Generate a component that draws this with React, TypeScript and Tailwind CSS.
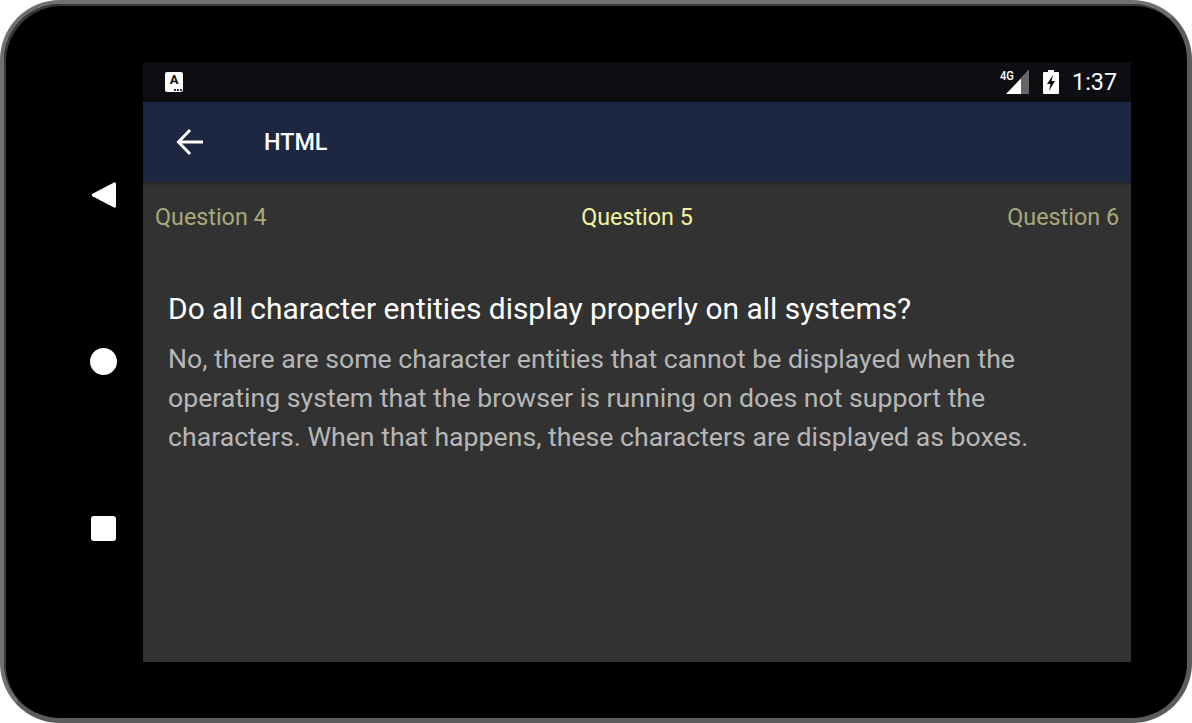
const roboto = "font-['Roboto',sans-serif]";

function AppIcon() {
  return (
    <div className="relative w-[18px] h-[20px] bg-white rounded-[2px] flex justify-center">
      <span className="font-['Roboto',sans-serif] font-bold text-[13px] leading-[16px] text-[#0c0e12]">A</span>
      <div className="absolute right-[1px] bottom-[1px] flex gap-[1px]">
        <div className="w-[2px] h-[2px] bg-[#333]" />
        <div className="w-[2px] h-[2px] bg-[#333]" />
        <div className="w-[2px] h-[2px] bg-[#333]" />
      </div>
    </div>
  );
}

function SignalIcon() {
  return (
    <svg width="30" height="32" viewBox="0 -4 30 32" className="block">
      <polygon points="29,0 29,24 6,24" fill="#fff" />
      <polygon points="29,0 29,24 21,24 21,8.3" fill="#666" />
      <text x="0" y="10" fontFamily="Roboto, sans-serif" fontWeight="500" fontSize="13.5" textLength="14" lengthAdjust="spacingAndGlyphs" fill="#fff">4G</text>
    </svg>
  );
}

function BatteryIcon() {
  return (
    <svg width="16" height="24" viewBox="0 0 16 24" className="block">
      <path d="M5 0h6v2h4a1 1 0 0 1 1 1v20a1 1 0 0 1-1 1H1a1 1 0 0 1-1-1V3a1 1 0 0 1 1-1h4z" fill="#fff" />
      <path d="M10 5 4 14h3.5L6 21l6-10H8.5z" fill="#0c0e12" />
    </svg>
  );
}

function BackArrow() {
  return (
    <svg width="28" height="28" viewBox="0 0 28 28" fill="none" stroke="#fff" strokeWidth="3" className="block">
      <path d="M27 14H3" />
      <path d="M14 2 2.5 14 14 26" />
    </svg>
  );
}

export default function App() {
  return (
    <div className={`w-[1192px] h-[723px] bg-white overflow-hidden ${roboto}`}>
      <div className="w-full h-full flex bg-black rounded-[60px] border-[4px] border-r-[5px] border-b-[5px] border-t-[#707070] border-l-[#707070] border-r-[#5c5c5c] border-b-[#5c5c5c] shadow-[inset_2px_2px_0_#383838]">
        {/* Nav keys */}
        <div className="w-[139px] shrink-0 flex flex-col pt-[177px] pl-[87px]">
          <svg width="26" height="28" viewBox="0 0 26 28" className="block">
            <path d="M23 1.5a1.5 1.5 0 0 1 2 1.4v22.2a1.5 1.5 0 0 1-2 1.4L1.5 15.2a1.4 1.4 0 0 1 0-2.4z" fill="#fff" />
          </svg>
          <div className="w-[27px] h-[27px] rounded-full bg-white mt-[139px] -ml-[1px]" />
          <div className="w-[25px] h-[25px] rounded-[3px] bg-white mt-[141px]" />
        </div>

        {/* Screen */}
        <div className="w-[988px] mt-[58px] mb-[56px] flex flex-col bg-[#323232]">
          <div className="h-[40px] bg-[#0c0e12] flex items-center pl-[22px] pr-[14px]">
            <AppIcon />
            <div className="ml-auto flex items-center">
              <SignalIcon />
              <div className="ml-[13px]"><BatteryIcon /></div>
              <span className="ml-[13px] mt-[2px] text-[23.33px] leading-none text-white">1:37</span>
            </div>
          </div>

          <div className="h-[80px] bg-[#1d2741] flex items-center pl-[33px] shadow-[0_2px_3px_rgba(0,0,0,0.25)]">
            <BackArrow />
            <span className="ml-[60px] text-[23.33px] font-medium text-white">HTML</span>
          </div>

          <div className="flex justify-between px-[12px] pt-[20px] text-[23.33px] leading-[30px] text-[#a8a97c]">
            <span>Question 4</span>
            <span className="text-[#f3f3a0]">Question 5</span>
            <span>Question 6</span>
          </div>

          <div className="px-[25px] pt-[59px]">
            <h1 className="text-[29.93px] leading-[36px] font-normal text-white">
              Do all character entities display properly on all systems?
            </h1>
            <p className="mt-[13px] text-[26.67px] leading-[39px] text-[#b7b7b7]">
              No, there are some character entities that cannot be displayed when the
              <br />
              operating system that the browser is running on does not support the
              <br />
              characters. When that happens, these characters are displayed as boxes.
            </p>
          </div>
        </div>
      </div>
    </div>
  );
}
